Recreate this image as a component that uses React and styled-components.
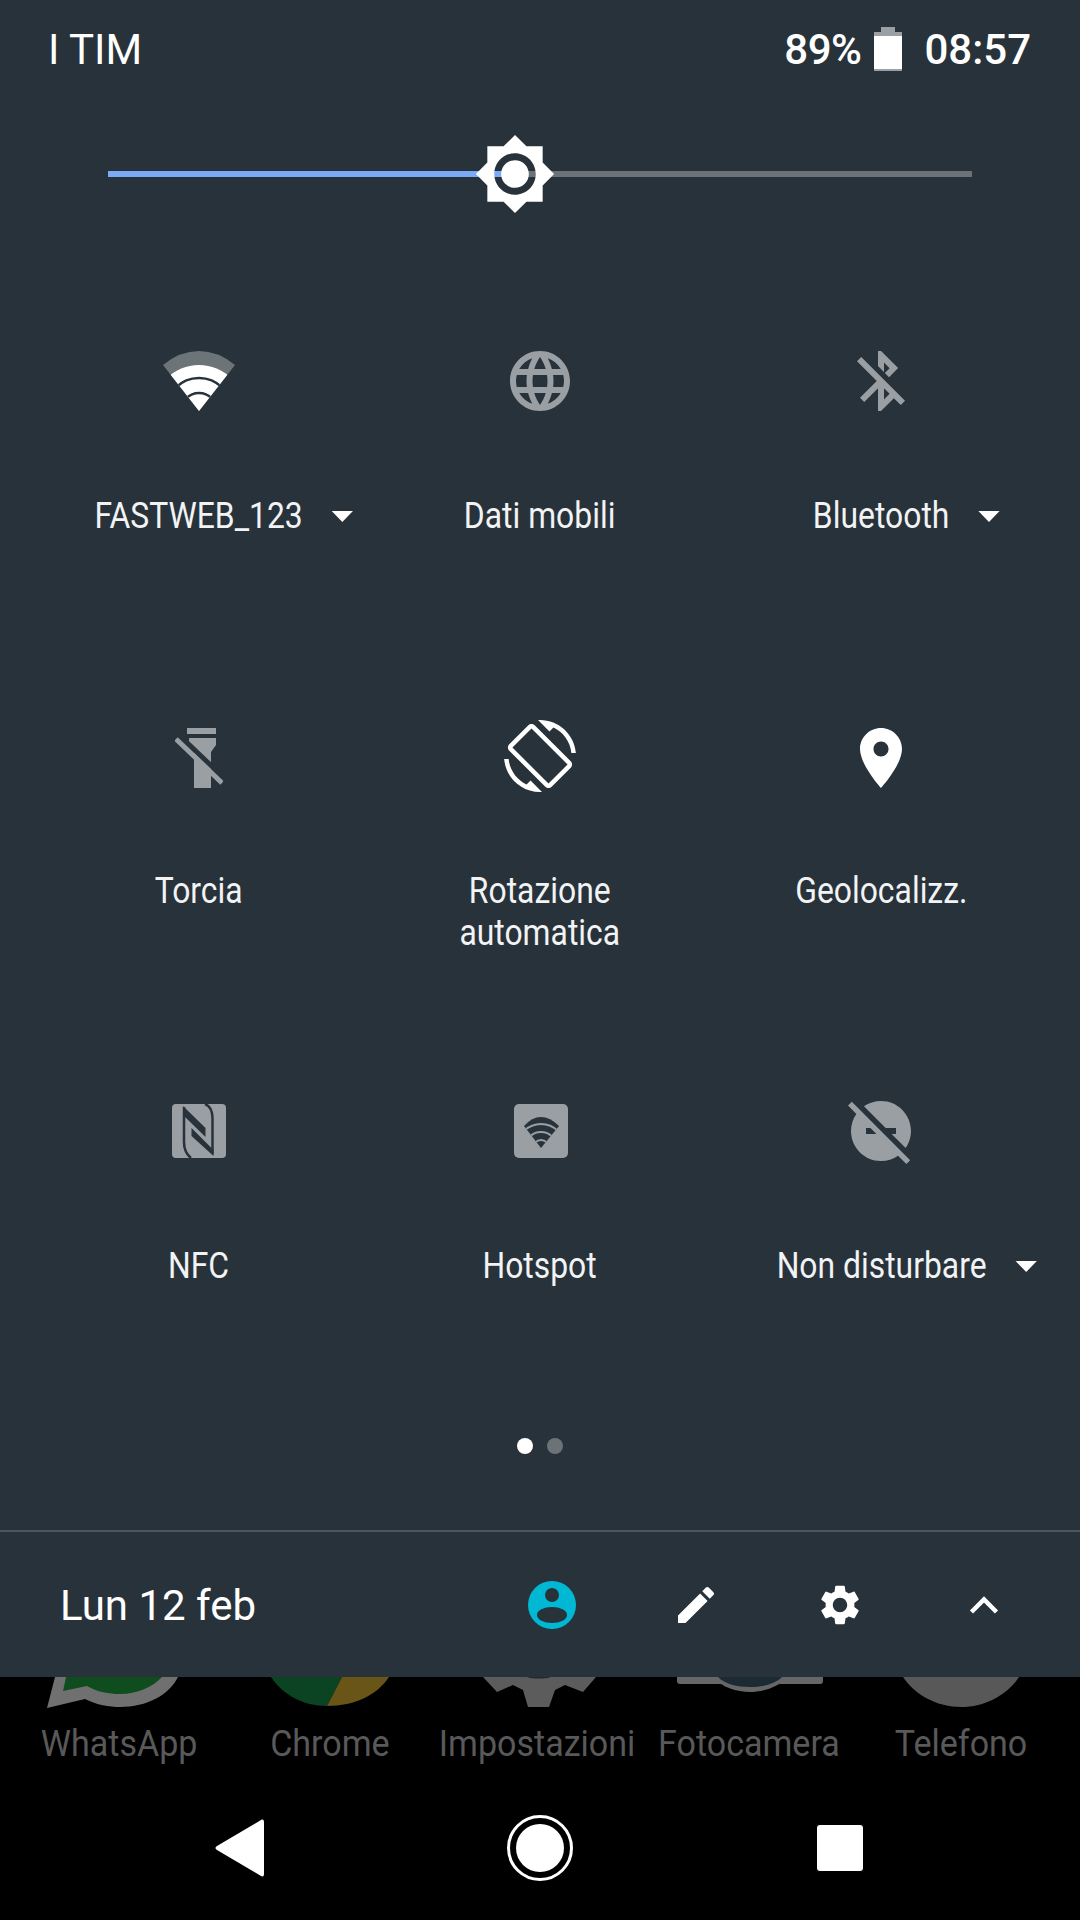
import React from 'react';
import styled, { createGlobalStyle } from 'styled-components';

const GlobalStyle = createGlobalStyle`
  html, body { margin: 0; padding: 0; background: #000; }
  body { font-family: Roboto, "Noto Sans", sans-serif; }
`;

const WHITE = '#ffffff';
const DIM = '#9a9fa4';
const PANEL = '#28323a';

const paths = {
  language: 'M11.99 2C6.47 2 2 6.48 2 12s4.47 10 9.99 10C17.52 22 22 17.52 22 12S17.52 2 11.99 2zm6.93 6h-2.95c-.32-1.25-.78-2.45-1.38-3.56 1.84.63 3.37 1.91 4.33 3.56zM12 4.04c.83 1.2 1.48 2.53 1.91 3.96h-3.82c.43-1.43 1.08-2.76 1.91-3.96zM4.26 14C4.1 13.36 4 12.69 4 12s.1-1.36.26-2h3.38c-.08.66-.14 1.32-.14 2 0 .68.06 1.34.14 2H4.26zm.82 2h2.95c.32 1.25.78 2.45 1.38 3.56-1.84-.63-3.37-1.9-4.33-3.56zm2.95-8H5.08c.96-1.66 2.49-2.93 4.33-3.56C8.81 5.55 8.35 6.75 8.03 8zM12 19.96c-.83-1.2-1.48-2.53-1.91-3.96h3.82c-.43 1.43-1.08 2.76-1.91 3.96zM14.34 14H9.66c-.09-.66-.16-1.32-.16-2 0-.68.07-1.35.16-2h4.68c.09.65.16 1.32.16 2 0 .68-.07 1.34-.16 2zm.25 5.56c.6-1.11 1.06-2.31 1.38-3.56h2.95c-.96 1.65-2.49 2.93-4.33 3.56zM16.36 14c.08-.66.14-1.32.14-2 0-.68-.06-1.34-.14-2h3.38c.16.64.26 1.31.26 2s-.1 1.36-.26 2h-3.38z',
  bluetoothOff: 'M13 5.83l1.88 1.88-1.6 1.6 1.41 1.41 3.02-3.02L12 2h-1v5.03l2 2v-3.2zM5.41 4L4 5.41 10.59 12 5 17.59 6.41 19 11 14.41V22h1l4.29-4.29 2.3 2.29L20 18.59 5.41 4zM13 18.17v-3.76l1.88 1.88L13 18.17z',
  rotation: 'M16.48 2.52c3.27 1.55 5.61 4.72 5.97 8.48h1.5C23.44 4.84 18.29 0 12 0l-.66.03 3.81 3.81 1.33-1.32zm-6.25-.77c-.59-.59-1.54-.59-2.12 0L1.75 8.11c-.59.59-.59 1.54 0 2.12l12.02 12.02c.59.59 1.54.59 2.12 0l6.36-6.36c.59-.59.59-1.54 0-2.12L10.23 1.75zm4.6 19.44L2.81 9.17l6.36-6.36 12.02 12.02-6.36 6.36zm-7.31.29C4.25 19.94 1.91 16.76 1.55 13H.05C.56 19.16 5.71 24 12 24l.66-.03-3.81-3.81-1.33 1.32z',
  place: 'M12 2C8.13 2 5 5.13 5 9c0 5.25 7 13 7 13s7-7.75 7-13c0-3.87-3.13-7-7-7zm0 9.5c-1.38 0-2.5-1.12-2.5-2.5s1.12-2.5 2.5-2.5 2.5 1.12 2.5 2.5-1.12 2.5-2.5 2.5z',
  dndOff: 'M17 11v2h-1.46l4.68 4.68C21.34 16.07 22 14.11 22 12c0-5.52-4.48-10-10-10-2.11 0-4.07.66-5.68 1.78L13.54 11H17zM2.27 2.27L1 3.54l2.78 2.78C2.66 7.93 2 9.89 2 12c0 5.52 4.48 10 10 10 2.11 0 4.07-.66 5.68-1.78L20.46 23l1.27-1.27L11 11 2.27 2.27zM7 13v-2h1.46l2 2H7z',
  brightness: 'M20 8.69V4h-4.69L12 .69 8.69 4H4v4.69L.69 12 4 15.31V20h4.69L12 23.31 15.31 20H20v-4.69L23.31 12 20 8.69zM12 18c-3.31 0-6-2.69-6-6s2.69-6 6-6 6 2.69 6 6-2.69 6-6 6zm0-10c-2.21 0-4 1.79-4 4s1.79 4 4 4 4-1.79 4-4-1.79-4-4-4z',
  edit: 'M3 17.25V21h3.75L17.81 9.94l-3.75-3.75L3 17.25zM20.71 7.04c.39-.39.39-1.02 0-1.41l-2.34-2.34c-.39-.39-1.02-.39-1.41 0l-1.83 1.83 3.75 3.75 1.83-1.83z',
  settings: 'M19.14 12.94c.04-.3.06-.61.06-.94 0-.32-.02-.64-.07-.94l2.03-1.58c.18-.14.23-.41.12-.61l-1.92-3.32c-.12-.22-.37-.29-.59-.22l-2.39.96c-.5-.38-1.03-.7-1.62-.94l-.36-2.54c-.04-.24-.24-.41-.48-.41h-3.84c-.24 0-.43.17-.47.41l-.36 2.54c-.59.24-1.13.57-1.62.94l-2.39-.96c-.22-.08-.47 0-.59.22L2.74 8.87c-.12.21-.08.47.12.61l2.03 1.58c-.05.3-.09.63-.09.94s.02.64.07.94l-2.03 1.58c-.18.14-.23.41-.12.61l1.92 3.32c.12.22.37.29.59.22l2.39-.96c.5.38 1.03.7 1.62.94l.36 2.54c.05.24.24.41.48.41h3.84c.24 0 .44-.17.47-.41l.36-2.54c.59-.24 1.13-.56 1.62-.94l2.39.96c.22.08.47 0 .59-.22l1.92-3.32c.12-.22.07-.47-.12-.61l-2.01-1.58zM12 15.6c-1.98 0-3.6-1.62-3.6-3.6s1.62-3.6 3.6-3.6 3.6 1.62 3.6 3.6-1.62 3.6-3.6 3.6z',
};

const MaterialIcon = ({ d, size = 72, color = WHITE, viewBox = '0 0 24 24' }) => (
  <svg width={size} height={size} viewBox={viewBox} fill={color}><path d={d} /></svg>
);

const WifiIcon = () => (
  <svg width="72" height="72" viewBox="0 0 72 72">
    <defs>
      <clipPath id="wifi-wedge">
        <path d="M36 66 L72 20 Q55 6 36 6 Q17 6 0 20 Z" />
      </clipPath>
    </defs>
    <g clipPath="url(#wifi-wedge)">
      <rect width="72" height="72" fill="#6c7478" />
      <circle cx="36" cy="66" r="46" fill={WHITE} />
      <circle cx="36" cy="66" r="33" fill="none" stroke={PANEL} strokeWidth="2.5" />
      <circle cx="36" cy="66" r="18" fill="none" stroke={PANEL} strokeWidth="2.5" />
    </g>
  </svg>
);

const FlashlightOffIcon = () => (
  <svg width="48" height="68" viewBox="0 -6 48 68" fill={DIM}>
    <rect x="12" y="0" width="29" height="6" />
    <path d="M14 10 H41 V17 L36 24 V60 H19 V24 L14 17 Z" />
    <path d="M4 7 L50 51" stroke={PANEL} strokeWidth="5" fill="none" />
    <path d="M1 11 L47 55" stroke={DIM} strokeWidth="5" fill="none" />
  </svg>
);

const NfcIcon = () => (
  <svg width="54" height="54" viewBox="0 0 54 54">
    <rect width="54" height="54" rx="4" fill={DIM} />
    <g fill="none" stroke={PANEL} strokeWidth="2.5">
      <path d="M12 3 V38 C12 46 14 50 19 54" />
      <path d="M33 0 C38 2 40.5 6 40.5 14 V50" />
    </g>
    <g fill={PANEL}>
      <path d="M11 2 L33.5 24 V33 L11 11 Z" />
      <path d="M19.5 24 L41.5 46 V52 L19.5 32 Z" />
    </g>
  </svg>
);

const HotspotIcon = () => (
  <svg width="54" height="54" viewBox="0 0 54 54">
    <defs>
      <clipPath id="hotspot-wedge">
        <path d="M27 44 L45 22 Q36 13 27 13 Q18 13 10 22 Z" />
      </clipPath>
    </defs>
    <rect width="54" height="54" rx="5" fill={DIM} />
    <g clipPath="url(#hotspot-wedge)">
      <rect width="54" height="54" fill={PANEL} />
      <circle cx="27" cy="44" r="24" fill="none" stroke={DIM} strokeWidth="2" />
      <circle cx="27" cy="44" r="16" fill="none" stroke={DIM} strokeWidth="2" />
      <circle cx="27" cy="44" r="8" fill="none" stroke={DIM} strokeWidth="2" />
    </g>
  </svg>
);

const UserIcon = () => (
  <svg width="48" height="48" viewBox="0 0 48 48">
    <circle cx="24" cy="24" r="24" fill="#00b8d4" />
    <circle cx="24" cy="14" r="7" fill={PANEL} />
    <ellipse cx="24" cy="34" rx="15" ry="8" fill={PANEL} />
  </svg>
);

const ChevronIcon = () => (
  <svg width="32" height="22" viewBox="0 0 32 22" fill="none" stroke={WHITE} strokeWidth="4.5">
    <path d="M3.5 18 L16 5.5 L28.5 18" />
  </svg>
);

const BatteryIcon = () => (
  <svg width="28" height="44" viewBox="0 0 28 44">
    <path d="M7 0 H21 V5 H28 V44 H0 V5 H7 Z" fill="#9aa0a4" />
    <rect y="9" width="28" height="33" fill={WHITE} />
  </svg>
);

// the dock icons sit behind the panel, only their lower edge shows
const WhatsappShape = () => (
  <svg width="144" height="31" viewBox="0 0 144 31">
    <path d="M8 0 L0 31 L38 22 C50 28 62 30 73 30 C100 30 122 18 131 0 Z" fill="#707070" />
    <path d="M19 0 L16 14 L40 9 C50 15 62 17 73 17 C90 17 106 10 115 0 Z" fill="#0f4d1e" />
  </svg>
);

const ChromeShape = () => (
  <svg width="118" height="31" viewBox="0 0 118 31">
    <path d="M0 0 C12 18 32 29 56 29 L71 0 Z" fill="#0a4423" />
    <path d="M71 0 L56 29 C84 29 106 18 118 0 Z" fill="#6a5518" />
  </svg>
);

const GearShape = () => (
  <svg width="113" height="31" viewBox="0 0 113 31">
    <path d="M0 0 L14 15 L30 8 L40 13 L45 30 H66 L72 13 L82 8 L100 15 L113 0 Z" fill="#5c5c5c" />
    <path d="M44 0 C48 2 64 2 68 0 Z" fill="#222a2e" />
  </svg>
);

const CameraShape = () => (
  <svg width="146" height="31" viewBox="0 0 146 31">
    <path d="M0 0 H146 V4 Q146 7 143 7 H3 Q0 7 0 4 Z" fill="#666666" />
    <path d="M36 0 C44 10 60 15 73 15 C86 15 102 10 110 0 Z" fill="#666666" />
    <path d="M41 0 C48 7 60 10 73 10 C86 10 98 7 105 0 Z" fill="#1c2a33" />
  </svg>
);

const PhoneShape = () => (
  <svg width="116" height="31" viewBox="0 0 116 31">
    <path d="M0 0 C12 18 34 30 58 30 C82 30 104 18 116 0 Z" fill="#585858" />
  </svg>
);

const Page = styled.div`
  width: 1080px;
  height: 1920px;
  background: #000;
  display: flex;
  flex-direction: column;
  overflow: hidden;
`;

const Panel = styled.section`
  height: 1677px;
  flex: none;
  background: ${PANEL};
  display: flex;
  flex-direction: column;
`;

const StatusBar = styled.header`
  height: 98px;
  padding: 0 49px 0 48px;
  display: flex;
  align-items: center;
  justify-content: space-between;
  color: ${WHITE};
  font-size: 42px;
`;

const StatusRight = styled.div`
  display: flex;
  align-items: center;
`;

const BatteryLevel = styled.span`
  font-weight: 500;
  margin-right: 13px;
  letter-spacing: -0.5px;
`;

const Clock = styled.span`
  font-weight: 500;
  margin-left: 22px;
`;

const SliderRow = styled.div`
  height: 152px;
  padding: 0 108px;
  display: flex;
  align-items: center;
`;

const Track = styled.div`
  position: relative;
  flex: 1;
  height: 6px;
  background: #6b7376;
`;

const TrackFill = styled.div`
  height: 100%;
  background: #7baaf7;
`;

const Thumb = styled.div`
  position: absolute;
  top: 50%;
  transform: translate(-50%, -50%);
  line-height: 0;
`;

const Tiles = styled.div`
  margin-top: 95px;
  padding: 0 28px;
  display: grid;
  grid-template-columns: repeat(3, 1fr);
  grid-template-rows: 375px 375px auto;
`;

const Tile = styled.div`
  display: flex;
  flex-direction: column;
  align-items: center;
`;

const TileIcon = styled.div`
  height: 72px;
  display: flex;
  align-items: center;
  justify-content: center;
  margin-bottom: 78px;
  padding-left: ${(p) => p.$pad || 0}px;
`;

const TileLabel = styled.div`
  position: relative;
  font-size: 36px;
  line-height: 42px;
  text-align: center;
  color: #f2f3f4;
  transform: scaleX(0.885);
  white-space: pre-line;
`;

const Caret = styled.span`
  position: absolute;
  left: 100%;
  top: 16px;
  margin-left: 33px;
  border-left: 12px solid transparent;
  border-right: 12px solid transparent;
  border-top: 11px solid ${WHITE};
`;

const PageDots = styled.div`
  margin-top: 151px;
  display: flex;
  justify-content: center;
  gap: 14px;
`;

const Dot = styled.span`
  width: 16px;
  height: 16px;
  border-radius: 50%;
  background: ${(p) => (p.$active ? WHITE : '#6b7376')};
`;

const Footer = styled.footer`
  margin-top: auto;
  height: 147px;
  border-top: 2px solid #4b555b;
  box-sizing: border-box;
  display: flex;
  align-items: center;
  padding-left: 60px;
`;

const DateText = styled.div`
  flex: 1;
  color: ${WHITE};
  font-size: 42px;
  padding-top: 1px;
`;

const FooterActions = styled.div`
  display: grid;
  grid-template-columns: repeat(4, 144px);
  padding-right: 24px;
`;

const FooterAction = styled.div`
  display: flex;
  align-items: center;
  justify-content: center;
  height: 48px;
`;

const Dock = styled.div`
  height: 99px;
  padding: 0 14px;
  display: grid;
  grid-template-columns: repeat(5, minmax(0, 1fr));
`;

const DockApp = styled.div`
  display: flex;
  flex-direction: column;
  align-items: center;
`;

const DockClip = styled.div`
  height: 31px;
  line-height: 0;
  margin-bottom: 15px;
`;

const DockLabel = styled.div`
  font-size: 37px;
  line-height: 42px;
  color: #595959;
  white-space: nowrap;
  transform: scaleX(0.92);
  padding-right: ${(p) => p.$nudge || 0}px;
`;

const NavBar = styled.nav`
  flex: 1;
  padding: 0 90px;
  display: grid;
  grid-template-columns: repeat(3, 1fr);
  align-items: center;
  justify-items: center;
`;

const tiles = [
  { label: 'FASTWEB_123', caret: true, icon: <WifiIcon /> },
  { label: 'Dati mobili', icon: <MaterialIcon d={paths.language} color={DIM} /> },
  { label: 'Bluetooth', caret: true, icon: <MaterialIcon d={paths.bluetoothOff} color={DIM} /> },
  { label: 'Torcia', icon: <FlashlightOffIcon /> },
  { label: 'Rotazione\nautomatica', icon: <MaterialIcon d={paths.rotation} /> },
  { label: 'Geolocalizz.', icon: <MaterialIcon d={paths.place} viewBox="0 -0.67 24 24" /> },
  { label: 'NFC', icon: <NfcIcon /> },
  { label: 'Hotspot', pad: 3, icon: <HotspotIcon /> },
  { label: 'Non disturbare', caret: true, icon: <MaterialIcon d={paths.dndOff} color={DIM} /> },
];

const dockApps = [
  { label: 'WhatsApp', icon: <WhatsappShape /> },
  { label: 'Chrome', icon: <ChromeShape /> },
  { label: 'Impostazioni', nudge: 6, icon: <GearShape /> },
  { label: 'Fotocamera', nudge: 4, icon: <CameraShape /> },
  { label: 'Telefono', icon: <PhoneShape /> },
];

const BRIGHTNESS = 47.1;

const App = () => {
  return (
    <Page>
      <GlobalStyle />
      <Panel>
        <StatusBar>
          <span>I TIM</span>
          <StatusRight>
            <BatteryLevel>89%</BatteryLevel>
            <BatteryIcon />
            <Clock>08:57</Clock>
          </StatusRight>
        </StatusBar>

        <SliderRow>
          <Track>
            <TrackFill style={{ width: `${BRIGHTNESS}%` }} />
            <Thumb style={{ left: `${BRIGHTNESS}%` }}>
              <MaterialIcon d={paths.brightness} size={83} />
            </Thumb>
          </Track>
        </SliderRow>

        <Tiles>
          {tiles.map((t) => (
            <Tile key={t.label}>
              <TileIcon $pad={t.pad}>{t.icon}</TileIcon>
              <TileLabel>
                {t.label}
                {t.caret && <Caret />}
              </TileLabel>
            </Tile>
          ))}
        </Tiles>

        <PageDots>
          <Dot $active />
          <Dot />
        </PageDots>

        <Footer>
          <DateText>Lun 12 feb</DateText>
          <FooterActions>
            <FooterAction><UserIcon /></FooterAction>
            <FooterAction><MaterialIcon d={paths.edit} size={48} /></FooterAction>
            <FooterAction><MaterialIcon d={paths.settings} size={48} /></FooterAction>
            <FooterAction><ChevronIcon /></FooterAction>
          </FooterActions>
        </Footer>
      </Panel>

      <Dock>
        {dockApps.map((app) => (
          <DockApp key={app.label}>
            <DockClip>{app.icon}</DockClip>
            <DockLabel $nudge={app.nudge}>{app.label}</DockLabel>
          </DockApp>
        ))}
      </Dock>

      <NavBar>
        <svg width="50" height="58" viewBox="0 0 50 58" fill={WHITE}>
          <path d="M46 1 C48 0 49 1 49 3 V55 C49 57 48 58 46 57 L2 31 C0 30 0 28 2 27 Z" />
        </svg>
        <svg width="68" height="68" viewBox="0 0 68 68">
          <circle cx="34" cy="34" r="31.5" fill="none" stroke={WHITE} strokeWidth="3" />
          <circle cx="34" cy="34" r="24" fill={WHITE} />
        </svg>
        <svg width="46" height="46" viewBox="0 0 46 46" fill={WHITE}>
          <rect width="46" height="46" rx="3" />
        </svg>
      </NavBar>
    </Page>
  );
};

export default App;
